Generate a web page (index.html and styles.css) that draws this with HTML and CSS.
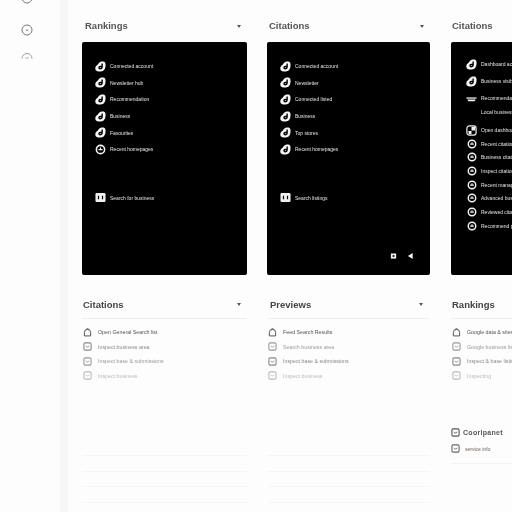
FILE: index.html
```html
<!DOCTYPE html>
<html lang="en">
<head>
<meta charset="utf-8">
<title>Rankings</title>
<link rel="stylesheet" href="styles.css">
</head>
<body>
<svg class="defs" width="0" height="0" aria-hidden="true">
  <symbol id="blob" viewBox="0 0 12 12">
    <path fill="#f6f6f6" d="M4.500 1.800C5.800.6 9-.1 10.400 1c1.300 1 1.200 3.200 1 5-.3 2.500-1.400 4.800-3.900 5.200-2.300.4-5.500.4-6.700-1.200C-.2 8.500.4 6.200 1.800 5 3 4 3.500 2.800 4.500 1.800Z"/>
    <path fill="none" stroke="#000" stroke-width="1.500" d="M7.800 2.800v3.800c0 1.100-.9 1.900-2 1.900-.9 0-1.500-.5-1.500-1.200S5 6 5.800 6h2"/>
  </symbol>
  <symbol id="ring" viewBox="0 0 12 12">
    <circle cx="6" cy="6" r="4.500" fill="none" stroke="#f4f4f4" stroke-width="1.700"/>
    <path fill="none" stroke="#f4f4f4" stroke-width="1.300" d="M3.800 6.200h4.400M6 3.800v2.600"/>
  </symbol>
  <symbol id="tile" viewBox="0 0 12 12">
    <rect x=".5" y="1" width="11" height="10" rx="1.500" fill="#efefef"/>
    <path stroke="#000" stroke-width="1.300" d="M3.800 4v4M8.200 4v4"/>
  </symbol>
  <symbol id="grid" viewBox="0 0 12 12">
    <rect x="1" y="1" width="10" height="10" rx="2.500" fill="none" stroke="#f2f2f2" stroke-width="1.300"/>
    <path fill="#f2f2f2" d="M6 2h4v4H6ZM2.500 6.500H6V10H3Z"/>
  </symbol>
  <symbol id="dish" viewBox="0 0 12 12">
    <path fill="none" stroke="#f2f2f2" stroke-width="1.400" d="M.5 5.500h11"/>
    <path fill="#f2f2f2" d="M1.500 7h9L9.500 9h-7Z"/>
  </symbol>
  <symbol id="box" viewBox="0 0 10 10">
    <rect x="1" y="1" width="8" height="8" rx="1.500" fill="none" stroke="currentColor" stroke-width="1.200"/>
    <path fill="none" stroke="currentColor" stroke-width="1" d="M3 4.200c.6 1.800 3.400 1.800 4 0"/>
  </symbol>
  <symbol id="bell" viewBox="0 0 10 10">
    <path fill="none" stroke="currentColor" stroke-width="1.100" d="M1.500 8.800V5a3.500 3.500 0 0 1 7 0v3.800ZM4 1.800V1h2v.8"/>
  </symbol>
</svg>

<div class="app">
  <nav class="rail">
    <svg class="rail-icon" viewBox="0 0 12 12"><circle cx="6" cy="6" r="5" class="rail-ring"/><path d="M4.800 6h2.400" class="rail-ring"/></svg>
    <svg class="rail-icon" viewBox="0 0 12 12"><circle cx="6" cy="6" r="5" class="rail-ring"/><path d="M4.800 6.200h2.400" class="rail-ring"/></svg>
    <svg class="rail-icon rail-icon-cut" viewBox="0 0 12 6"><path d="M1 5.500a5 5 0 0 1 10 0M4.500 5h3" class="rail-ring"/></svg>
  </nav>
  <div class="strip"></div>

  <main class="board">
    <section class="col">
      <header class="col-head"><h2>Rankings</h2><span class="caret"></span></header>
      <div class="panel">
        <ul class="menu">
          <li><svg class="mi"><use href="#blob"/></svg>Connected account</li>
          <li><svg class="mi"><use href="#blob"/></svg>Newsletter hub</li>
          <li><svg class="mi"><use href="#blob"/></svg>Recommendation</li>
          <li><svg class="mi"><use href="#blob"/></svg>Business</li>
          <li><svg class="mi"><use href="#blob"/></svg>Favourites</li>
          <li><svg class="mi"><use href="#ring"/></svg>Recent homepages</li>
        </ul>
        <ul class="menu menu-low">
          <li><svg class="mi"><use href="#tile"/></svg>Search for business</li>
        </ul>
      </div>
      <header class="sub-head"><h3>Citations</h3><span class="caret"></span></header>
      <ul class="list">
        <li class="t1"><svg class="li"><use href="#bell"/></svg>Open General Search list</li>
        <li class="t2"><svg class="li"><use href="#box"/></svg>Inspect business area</li>
        <li class="t3"><svg class="li"><use href="#box"/></svg>Inspect base &amp; submissions</li>
        <li class="t4"><svg class="li"><use href="#box"/></svg>Inspect business</li>
      </ul>
      <div class="faint-lines"><i></i><i></i><i></i><i></i></div>
    </section>

    <section class="col col-mid">
      <header class="col-head"><h2>Citations</h2><span class="caret"></span></header>
      <div class="panel">
        <ul class="menu">
          <li><svg class="mi"><use href="#blob"/></svg>Connected account</li>
          <li><svg class="mi"><use href="#blob"/></svg>Newsletter</li>
          <li><svg class="mi"><use href="#blob"/></svg>Connected listed</li>
          <li><svg class="mi"><use href="#blob"/></svg>Business</li>
          <li><svg class="mi"><use href="#blob"/></svg>Top stores</li>
          <li><svg class="mi"><use href="#blob"/></svg>Recent homepages</li>
        </ul>
        <ul class="menu menu-low">
          <li><svg class="mi"><use href="#tile"/></svg>Search listings</li>
        </ul>
        <div class="panel-tools">
          <svg viewBox="0 0 8 8"><path d="M1 1h6v6H1Z" fill="#f2f2f2"/><path d="M3 3h2v2H3Z" fill="#000"/></svg>
          <svg viewBox="0 0 8 8"><path d="M6.500 .5v7L1 4Z" fill="#f2f2f2"/></svg>
        </div>
      </div>
      <header class="sub-head"><h3>Previews</h3><span class="caret"></span></header>
      <ul class="list">
        <li class="t1"><svg class="li"><use href="#bell"/></svg>Feed Search Results</li>
        <li class="t3"><svg class="li"><use href="#box"/></svg>Search business area</li>
        <li class="t2"><svg class="li"><use href="#box"/></svg>Inspect base &amp; submissions</li>
        <li class="t4"><svg class="li"><use href="#box"/></svg>Inspect business</li>
      </ul>
      <div class="faint-lines"><i></i><i></i><i></i><i></i></div>
    </section>

    <section class="col col-end">
      <header class="col-head"><h2>Citations</h2></header>
      <div class="panel panel-dense">
        <ul class="menu menu-wide">
          <li><svg class="mi"><use href="#blob"/></svg>Dashboard account</li>
          <li><svg class="mi"><use href="#blob"/></svg>Business visibility</li>
          <li class="two-line"><svg class="mi"><use href="#dish"/></svg><span>Recommendations<br>Local business list</span></li>
        </ul>
        <ul class="menu menu-tight">
          <li><svg class="mi mi-grid"><use href="#grid"/></svg>Open dashboard view</li>
          <li><svg class="mi"><use href="#ring"/></svg>Recent citations page</li>
          <li><svg class="mi"><use href="#ring"/></svg>Business citations</li>
          <li><svg class="mi"><use href="#ring"/></svg>Inspect citations</li>
          <li><svg class="mi"><use href="#ring"/></svg>Recent manager pages</li>
          <li><svg class="mi"><use href="#ring"/></svg>Advanced business</li>
          <li><svg class="mi"><use href="#ring"/></svg>Reviewed citations</li>
          <li><svg class="mi"><use href="#ring"/></svg>Recommend pages</li>
        </ul>
      </div>
      <header class="sub-head"><h3>Rankings</h3></header>
      <ul class="list">
        <li class="t1"><svg class="li"><use href="#bell"/></svg>Google data &amp; sites</li>
        <li class="t3"><svg class="li"><use href="#box"/></svg>Google business listing</li>
        <li class="t2"><svg class="li"><use href="#box"/></svg>Inspect &amp; base listing</li>
        <li class="t4"><svg class="li"><use href="#box"/></svg>Inspecting</li>
      </ul>
      <div class="foot">
        <div class="foot-title"><svg class="li"><use href="#box"/></svg>Coorlpanet</div>
        <div class="foot-row"><svg class="li"><use href="#box"/></svg>service info</div>
      </div>
    </section>
  </main>
</div>
</body>
</html>
```

FILE: styles.css
```css
* { box-sizing: border-box; }

html, body {
  margin: 0;
  height: 512px;
  overflow: hidden;
  background: #fdfdfd;
  font-family: "Liberation Sans", Arial, sans-serif;
}

.defs { display: block; height: 0; }

ul { list-style: none; margin: 0; padding: 0; }
h2, h3 { margin: 0; font-weight: 400; }

.app { display: flex; height: 512px; overflow: hidden; }

/* left rail */
.rail {
  width: 60px;
  flex: none;
  height: 72px;
  overflow: hidden;
  display: flex;
  flex-direction: column;
  align-items: center;
  gap: 20px;
  padding-right: 6px;
  margin-top: -8px;
}
.rail-icon { width: 12px; height: 12px; flex: none; }
.rail-icon-cut { height: 6px; margin-top: -3px; opacity: .7; }
.rail-ring { fill: none; stroke: #777; stroke-width: 1; }

.strip { width: 8px; flex: none; background: #f6f6f6; }

/* board */
.board {
  display: flex;
  gap: 20px;
  padding-left: 14px;
  flex: 1;
  min-width: 0;
  overflow: hidden;
}
.col { width: 165px; flex: none; display: flex; flex-direction: column; }
.col-mid { width: 163px; }
.col-end { width: 200px; margin-left: 1px; }

.col-head {
  height: 42px;
  padding: 20px 6px 0 3px;
  display: flex;
  justify-content: space-between;
  align-items: flex-start;
}
.col-mid .col-head { padding-left: 2px; padding-right: 6px; }
.col-end .col-head { padding-left: 1px; }
.col-head h2 {
  font-size: 9.500px;
  line-height: 12px;
  color: #555;
  font-weight: 700;
  filter: blur(.35px);
}

.caret {
  width: 0;
  height: 0;
  margin-top: 5px;
  border: 2px solid transparent;
  border-top: 3px solid #555;
  border-bottom: 0;
}

/* dark panels */
.panel {
  position: relative;
  height: 233px;
  background: #000;
  border-radius: 2px;
  padding: 16px 0 0 13px;
  color: #e4e4e4;
  overflow: hidden;
  flex: none;
}

.menu li {
  display: flex;
  align-items: center;
  gap: 4px;
  height: 16.600px;
  font-size: 5px;
  white-space: nowrap;
  filter: blur(.25px);
}
.mi { width: 11px; height: 11px; flex: none; }
.menu-low { margin-top: 32px; }

.panel-dense { padding: 13.500px 0 0 15px; }
.menu-wide li { height: 17px; }
.menu-wide .two-line {
  height: 33.700px;
  line-height: 14px;
  align-items: flex-start;
  padding-top: 1.500px;
}
.menu-wide .two-line .mi { margin-top: 1.500px; }
.menu-tight li { height: 13.700px; }
.menu-tight .mi { width: 10px; height: 10px; margin-left: 1px; }
.menu-tight .mi-grid { width: 11px; height: 11px; margin-left: 0; }

.panel-tools {
  position: absolute;
  right: 16px;
  bottom: 15px;
  display: flex;
  gap: 10px;
}
.panel-tools svg { width: 7px; height: 8px; }

/* lower sections */
.sub-head {
  height: 44px;
  padding: 23px 6px 0 1px;
  display: flex;
  justify-content: space-between;
  align-items: flex-start;
  border-bottom: 1px solid #eeeeee;
}
.col-mid .sub-head { padding-left: 2px; margin-left: 1px; margin-right: 1px; }
.sub-head h3 {
  font-size: 9.500px;
  line-height: 14px;
  color: #444;
  font-weight: 700;
  filter: blur(.35px);
}

.list { padding-top: 6px; }
.list li {
  display: flex;
  align-items: center;
  gap: 6px;
  height: 14.500px;
  padding-left: 1px;
  font-size: 5.300px;
  white-space: nowrap;
  filter: blur(.25px);
}
.li { width: 9px; height: 9px; flex: none; }
.t1 { color: #555; }
.t2 { color: #888; }
.t3 { color: #999; }
.t4 { color: #bbb; }

.faint-lines {
  margin-top: 72px;
  display: flex;
  flex-direction: column;
  gap: 14.700px;
}
.faint-lines i { display: block; height: 1px; background: #f6f6f6; }

.foot { margin-top: 45px; border-bottom: 1px solid #f3f3f3; height: 36px; overflow: hidden; }
.foot-title {
  display: flex;
  align-items: center;
  gap: 3px;
  font-size: 7px;
  letter-spacing: .3px;
  color: #555;
  font-weight: 700;
  filter: blur(.25px);
}
.foot-row {
  display: flex;
  align-items: center;
  gap: 5px;
  margin-top: 7px;
  font-size: 5px;
  color: #666;
}
```
